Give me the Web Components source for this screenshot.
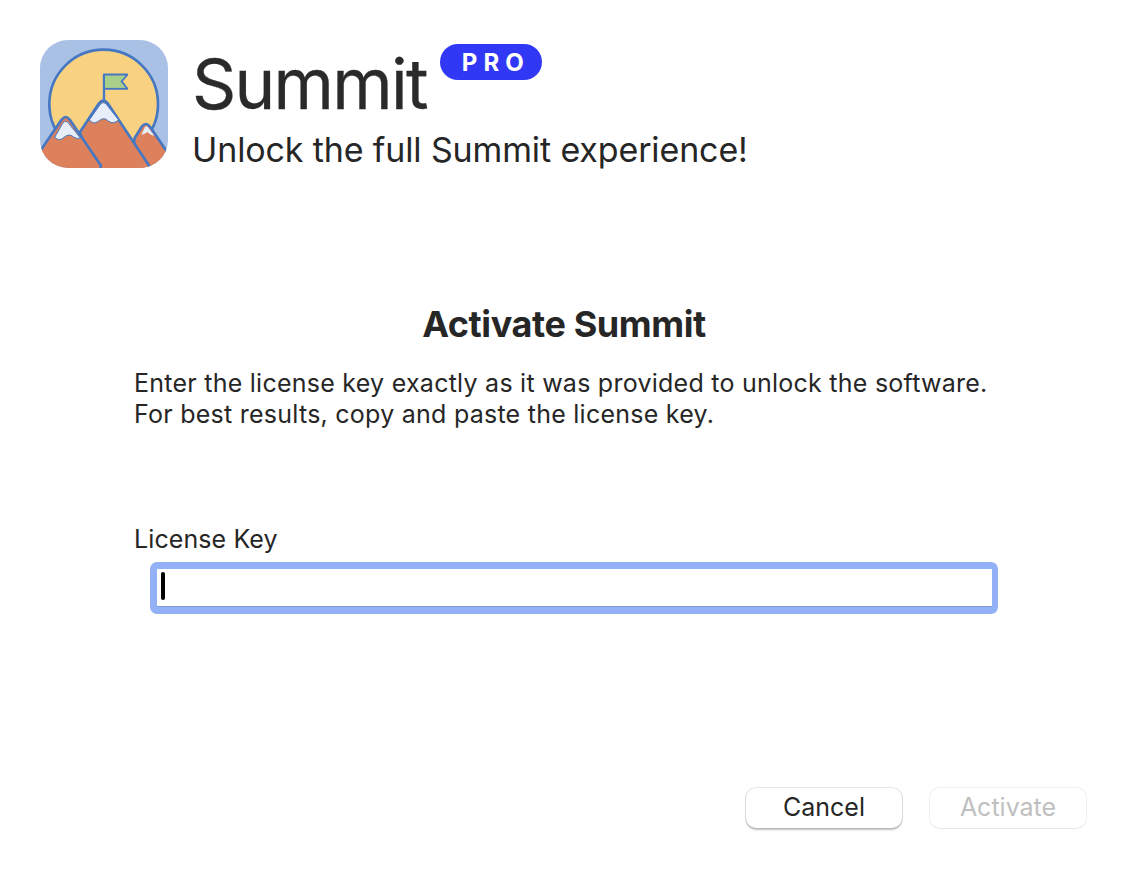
<!DOCTYPE html>
<html lang="en">
<head>
<meta charset="utf-8">
<title>Activate Summit</title>
<style>
  html, body { margin: 0; background: #fff; }
  body { font-family: Inter, "Liberation Sans", sans-serif; color: #262626; }
</style>
</head>
<body>
<summit-dialog>
  <app-header slot="header" name="Summit" tagline="Unlock the full Summit experience!"></app-header>
  <h-title slot="title">Activate Summit</h-title>
  <span slot="intro">Enter the license key exactly as it was provided to unlock the software.<br>For best results, copy and paste the license key.</span>
  <license-field slot="field" label="License Key"></license-field>
  <dialog-button slot="actions">Cancel</dialog-button>
  <dialog-button slot="actions" disabled>Activate</dialog-button>
</summit-dialog>

<script>
class SummitDialog extends HTMLElement {
  constructor() {
    super();
    this.attachShadow({ mode: 'open' }).innerHTML = `
      <style>
        :host { display: flex; flex-direction: column; width: 1128px; height: 870px; box-sizing: border-box; padding: 40px 42px 42px 40px; }
        .body { padding-left: 94px; margin-top: 130px; }
        .intro { font-size: 25px; line-height: 31px; letter-spacing: 0.25px; margin-top: 22px; }
        .field { margin-top: 93px; }
        .actions { display: flex; justify-content: flex-end; gap: 28px; margin-top: auto; }
      </style>
      <slot name="header"></slot>
      <div class="body">
        <slot name="title"></slot>
        <div class="intro"><slot name="intro"></slot></div>
        <div class="field"><slot name="field"></slot></div>
      </div>
      <div class="actions"><slot name="actions"></slot></div>`;
  }
}

class HTitle extends HTMLElement {
  constructor() {
    super();
    this.attachShadow({ mode: 'open' }).innerHTML = `
      <style>
        :host { display: block; width: 860px; text-align: center; font-size: 36px; line-height: 44px; font-weight: 700; letter-spacing: -0.4px; }
      </style>
      <slot></slot>`;
  }
}

class AppHeader extends HTMLElement {
  constructor() {
    super();
    this.attachShadow({ mode: 'open' });
  }
  connectedCallback() {
    this.shadowRoot.innerHTML = `
      <style>
        :host { display: flex; gap: 24px; align-items: flex-start; }
        svg { width: 128px; height: 128px; flex: none; display: block; }
        .name-row { display: flex; align-items: flex-start; gap: 13px; height: 84px; }
        .name { font-size: 69px; line-height: 88px; letter-spacing: -1.75px; color: #2a2a2a; -webkit-text-stroke: 0.3px #2a2a2a; }
        .badge { margin-top: 4px; width: 102px; height: 36px; border-radius: 18px; background: #3038f5; color: #fff;
          display: flex; align-items: center; justify-content: center; font-size: 24px; font-weight: 700; letter-spacing: 6px; padding-left: 10px; box-sizing: border-box; }
        .tagline { font-size: 34px; line-height: 44px; letter-spacing: -0.13px; margin-top: 4px; }
      </style>
      <svg viewBox="30 30 384 384" aria-hidden="true">
        <defs><clipPath id="tile"><rect x="30" y="30" width="384" height="384" rx="84"/></clipPath></defs>
        <g clip-path="url(#tile)" stroke-linejoin="round" stroke-linecap="round">
          <rect x="30" y="30" width="384" height="384" fill="#a9c1e5"/>
          <circle cx="221" cy="222" r="163" fill="#f8d281" stroke="#4577c2" stroke-width="8"/>
          <path d="M222 208V134H291L274 154L291 176H222" fill="none" stroke="#4577c2" stroke-width="7"/>
          <path d="M225 137H287L271 154L287 173H225Z" fill="#a8d08a"/>
          <path d="M314 324L336 289Q348 275 359 289L410 364V430H300Z" fill="#dc815b" stroke="#4577c2" stroke-width="8"/>
          <path d="M334 314L344 293Q348 285 355 293L373 317Q362 316 352 306Q346 312 334 314Z" fill="#e8eef9"/>
          <path d="M150 306L207 220Q220 204 233 220L358 408L358 430H200L150 310Z" fill="#dc815b" stroke="#4577c2" stroke-width="8"/>
          <path d="M178 270L210 224Q220 212 230 224L266 270Q250 284 236 274Q222 258 205 274Q190 286 178 270Z" fill="#e8eef9" stroke="#4577c2" stroke-width="3"/>
          <path d="M30 364L94 270Q107 252 120 270L212 406V430H30Z" fill="#dc815b" stroke="#4577c2" stroke-width="8"/>
          <path d="M74 322L98 280Q107 268 116 280L151 324Q142 328 132 322Q118 308 102 322Q88 336 74 322Z" fill="#e8eef9" stroke="#4577c2" stroke-width="3"/>
        </g>
      </svg>
      <div class="text">
        <div class="name-row">
          <span class="name">${this.getAttribute('name')}</span>
          <span class="badge">PRO</span>
        </div>
        <div class="tagline">${this.getAttribute('tagline')}</div>
      </div>`;
  }
}

class LicenseField extends HTMLElement {
  constructor() {
    super();
    this.attachShadow({ mode: 'open' });
  }
  connectedCallback() {
    this.shadowRoot.innerHTML = `
      <style>
        :host { display: block; }
        .label { font-size: 25px; line-height: 32px; letter-spacing: 0.1px; }
        .box { margin: 7px 0 0 16px; width: 848px; height: 52px; box-sizing: border-box; border: 7px solid #92b1f6; border-right-width: 6px; border-radius: 7px;
          background: #fff; padding: 3px 0 0 4px; box-shadow: inset 0 -1px 0 #7f9bdc; }
        .caret { display: block; width: 4px; height: 28px; border-radius: 2px; background: #000; }
      </style>
      <div class="label">${this.getAttribute('label')}</div>
      <div class="box"><span class="caret"></span></div>`;
  }
}

class DialogButton extends HTMLElement {
  constructor() {
    super();
    this.attachShadow({ mode: 'open' }).innerHTML = `
      <style>
        :host { display: flex; align-items: center; justify-content: center; width: 156px; height: 40px; box-sizing: border-box; padding-bottom: 2px;
          border-radius: 10px; background: #fff; font-size: 25px; color: #262626;
          box-shadow: 0 0 0 1px rgba(0,0,0,.08), 0 1.5px 2px rgba(0,0,0,.24); }
        :host([disabled]) { color: #bfbfbf; box-shadow: 0 0 0 1px rgba(0,0,0,.06), 0 1px 1px rgba(0,0,0,.04); }
      </style>
      <slot></slot>`;
  }
}

customElements.define('summit-dialog', SummitDialog);
customElements.define('h-title', HTitle);
customElements.define('app-header', AppHeader);
customElements.define('license-field', LicenseField);
customElements.define('dialog-button', DialogButton);
</script>
</body>
</html>
